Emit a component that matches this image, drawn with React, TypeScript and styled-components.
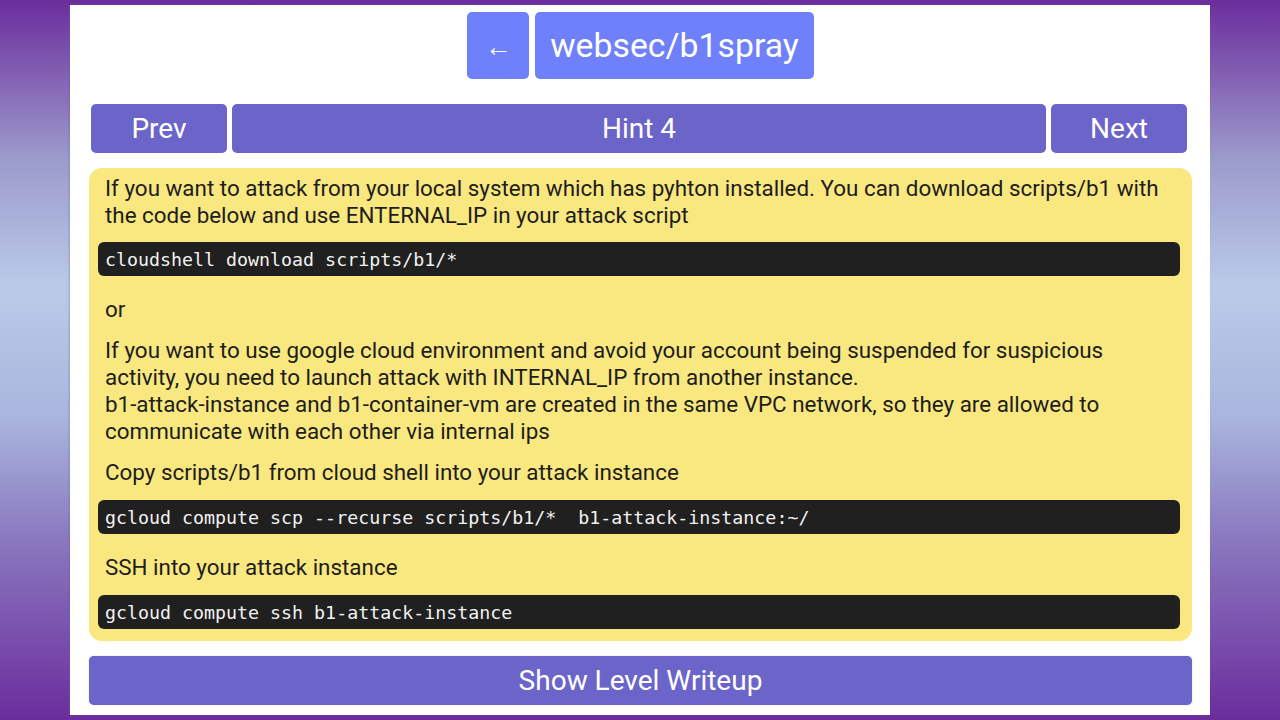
import React from "react";
import styled, { createGlobalStyle } from "styled-components";

const Global = createGlobalStyle`
  html, body { margin: 0; padding: 0; }
  body {
    min-height: 720px;
    background: linear-gradient(to bottom, #6b2d9d 0%, #9c9acb 22%, #bacbe9 40%, #a9b5dd 58%, #8a78bf 75%, #6b2d9d 100%);
    font-family: Roboto, "Liberation Sans", sans-serif;
  }
`;

const Panel = styled.div`
  box-sizing: border-box;
  width: 1140px;
  height: 710px;
  margin: 5px auto 0;
  background: #fff;
  padding: 7px 18px 10px 19px;
  display: flex;
  flex-direction: column;
  box-shadow: -1px 0 2px rgba(80, 100, 170, 0.35);
`;

const Header = styled.div`
  display: flex;
  justify-content: center;
  gap: 6px;
  margin-left: 0;
`;

const HeadButton = styled.button<{ $square?: boolean }>`
  box-sizing: border-box;
  height: 67px;
  border: none;
  border-radius: 5px;
  background: #6f80fb;
  color: #fff;
  font-family: Roboto, "Liberation Sans", sans-serif;
  font-size: ${(p) => (p.$square ? "27px" : "33.8px")};
  padding: ${(p) => (p.$square ? "3px 0 0" : "0 15px")};
  width: ${(p) => (p.$square ? "62px" : "auto")};
  display: flex;
  align-items: center;
  justify-content: center;
`;

const NavRow = styled.div`
  display: flex;
  gap: 5px;
  margin: 25px 5px 0 2px;
`;

const NavButton = styled.button<{ $grow?: boolean }>`
  box-sizing: border-box;
  height: 49px;
  border: none;
  border-radius: 5px;
  background: #6c65c9;
  color: #fff;
  font-family: Roboto, "Liberation Sans", sans-serif;
  font-size: 28px;
  flex: ${(p) => (p.$grow ? "1" : "0 0 136px")};
  padding: 0;
`;

const HintBox = styled.div`
  margin-top: 15px;
  background: #f9e77f;
  border-radius: 13px;
  padding: 7px 12px 12px 9px;
  color: #1d1d1d;
  font-size: 22.4px;
  line-height: 27px;
`;

const Para = styled.p<{ $tight?: boolean }>`
  margin: 0 0 ${(p) => (p.$tight ? "13px" : "14px")};
  padding: 0 7px;
`;

const Code = styled.pre`
  margin: 0 0 20px;
  background: #202020;
  color: #f2f2f2;
  border-radius: 6px;
  height: 34px;
  box-sizing: border-box;
  padding: 0 7px;
  display: flex;
  align-items: center;
  font-family: "DejaVu Sans Mono", "Liberation Mono", monospace;
  font-size: 18.3px;
  white-space: pre;
  &:last-child { margin-bottom: 0; }
`;

const WideButton = styled.button`
  margin-top: 15px;
  height: 49px;
  border: none;
  border-radius: 5px;
  background: #6c65c9;
  color: #fff;
  font-family: Roboto, "Liberation Sans", sans-serif;
  font-size: 28px;
  box-shadow: 0 0 1px rgba(60, 50, 140, 0.6);
`;

export default function App() {
  return (
    <>
      <Global />
      <Panel>
        <Header>
          <HeadButton $square>←</HeadButton>
          <HeadButton>websec/b1spray</HeadButton>
        </Header>
        <NavRow>
          <NavButton>Prev</NavButton>
          <NavButton $grow>Hint 4</NavButton>
          <NavButton>Next</NavButton>
        </NavRow>
        <HintBox>
          <Para $tight>
            If you want to attack from your local system which has pyhton installed. You can download scripts/b1 with
            the code below and use ENTERNAL_IP in your attack script
          </Para>
          <Code>cloudshell download scripts/b1/*</Code>
          <Para>or</Para>
          <Para>
            If you want to use google cloud environment and avoid your account being suspended for suspicious
            activity, you need to launch attack with INTERNAL_IP from another instance.
            <br />
            b1-attack-instance and b1-container-vm are created in the same VPC network, so they are allowed to
            communicate with each other via internal ips
          </Para>
          <Para>Copy scripts/b1 from cloud shell into your attack instance</Para>
          <Code>gcloud compute scp --recurse scripts/b1/*  b1-attack-instance:~/</Code>
          <Para>SSH into your attack instance</Para>
          <Code>gcloud compute ssh b1-attack-instance</Code>
        </HintBox>
        <WideButton>Show Level Writeup</WideButton>
      </Panel>
    </>
  );
}
